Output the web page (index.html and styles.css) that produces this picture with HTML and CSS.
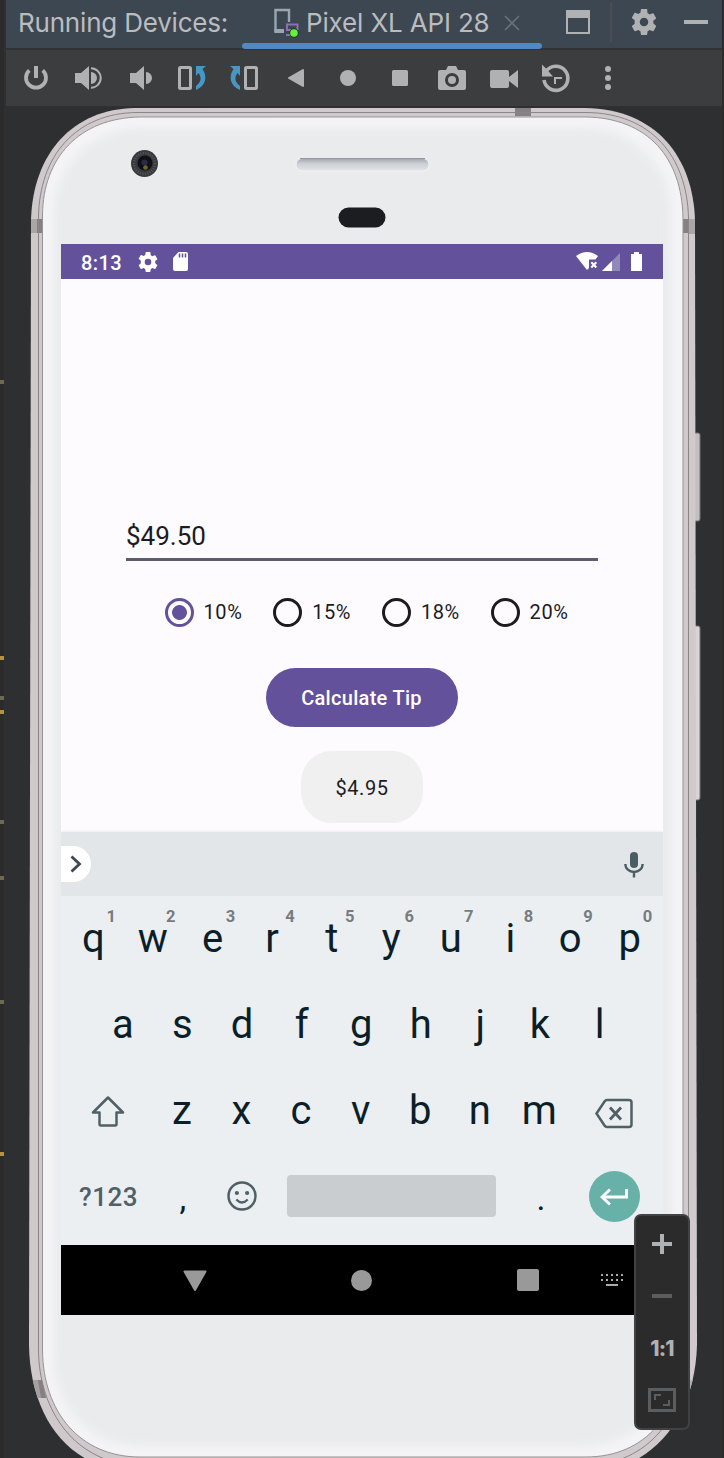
FILE: index.html
```html
<!DOCTYPE html>
<html lang="en">
<head>
<meta charset="utf-8">
<title>Running Devices</title>
<link rel="stylesheet" href="styles.css">
</head>
<body>
<div class="window">
  <aside class="gutter">
    <i class="mark" style="top:380px"></i><i class="mark hot" style="top:656px"></i><i class="mark" style="top:696px"></i><i class="mark hot" style="top:710px"></i><i class="mark" style="top:820px"></i><i class="mark" style="top:876px"></i><i class="mark" style="top:1000px"></i><i class="mark hot" style="top:1152px"></i>
  </aside>
  <main class="main">
    <header class="tabs">
      <span class="title">Running Devices:</span>
      <div class="tab">
        <svg class="tab-device" width="28" height="32" viewBox="0 0 28 32"><path d="M12 25H3.500V4H17v12" fill="none" stroke="#9aa7b0" stroke-width="2.400"/><path d="M2.500 23H12v4H2.500z" fill="#9aa7b0"/><path d="M15 25v-6.500H25.500V24M14 29h5M15 24h6" fill="none" stroke="#8a72b0" stroke-width="2"/><circle cx="22" cy="27" r="4.700" fill="#253a22"/><circle cx="22" cy="27" r="3.800" fill="#62f23c"/></svg>
        <span class="tab-name">Pixel XL API 28</span>
        <svg class="tab-close" width="16" height="16" viewBox="0 0 16 16"><path d="M1 1l14 14M15 1L1 15" stroke="#687178" stroke-width="1.700"/></svg>
      </div>
      <svg class="win-icon" width="24" height="24" viewBox="0 0 24 24"><path d="M0 0h24v24H0zM2 8v14h20V8z" fill="#afb1b3" fill-rule="evenodd"/></svg>
      <i class="divider"></i>
      <svg class="gear" width="26" height="26" viewBox="2 2 20 20"><path fill="#afb1b3" d="M19.140 12.940c.04-.3.06-.61.06-.94s-.02-.64-.07-.94l2.030-1.580a.49.49 0 0 0 .12-.61l-1.920-3.320a.49.49 0 0 0-.59-.22l-2.390.96a7 7 0 0 0-1.620-.94l-.36-2.540A.48.48 0 0 0 13.920 2h-3.840a.48.48 0 0 0-.47.410l-.36 2.540c-.59.24-1.130.57-1.620.94l-2.390-.96a.48.48 0 0 0-.59.220L2.740 8.470a.48.48 0 0 0 .12.610l2.030 1.580a6 6 0 0 0 0 2.680l-2.030 1.580a.49.49 0 0 0-.12.610l1.920 3.320c.12.220.37.290.59.220l2.390-.96c.5.380 1.030.7 1.620.94l.36 2.540c.05.240.24.410.48.410h3.840c.24 0 .44-.17.470-.41l.36-2.540a7 7 0 0 0 1.620-.94l2.390.96c.22.080.47 0 .59-.22l1.920-3.320a.48.48 0 0 0-.12-.61zM12 15.300A3.300 3.300 0 1 1 12 8.700a3.300 3.300 0 0 1 0 6.600z"/></svg>
      <i class="minimize"></i>
    </header>
    <nav class="tools">
      <svg viewBox="0 0 32 32"><path d="M9.300 8.300a10 10 0 1 0 13.400 0" fill="none" stroke="#afb1b3" stroke-width="3.800"/><path d="M14 4h4v12h-4z" fill="#afb1b3"/></svg>
      <svg viewBox="0 0 32 32"><g fill="#afb1b3"><path d="M3 11h6l8-7v24l-8-7H3zM19 10a6 6 0 0 1 0 12z"/></g><path d="M19 6.300a9.700 9.700 0 0 1 0 19.400" fill="none" stroke="#afb1b3" stroke-width="2"/></svg>
      <svg viewBox="0 0 32 32"><path d="M6 11h6l8-7v24l-8-7H6zM22 10a6 6 0 0 1 0 12z" fill="#afb1b3"/></svg>
      <svg viewBox="0 0 32 32"><rect x="3.500" y="5.500" width="11" height="21" rx="1" fill="none" stroke="#afb1b3" stroke-width="3"/><path d="M20 4h10l-3.500 3c5.500 8 3 17-6.500 21v-4c5-4 6-8 2.500-13L20 14z" fill="#4796c6"/></svg>
      <svg viewBox="0 0 32 32"><rect x="17.500" y="5.500" width="11" height="21" rx="1" fill="none" stroke="#afb1b3" stroke-width="3"/><path d="M12 4H2l3.500 3C0 15 2.500 24 12 28v-4c-5-4-6-8-2.500-13L12 14z" fill="#4796c6"/></svg>
      <svg viewBox="0 0 32 32"><path d="M9 16L23 8v16z" fill="#afb1b3" stroke="#afb1b3" stroke-width="2" stroke-linejoin="round"/></svg>
      <svg viewBox="0 0 32 32"><circle cx="16" cy="16" r="8" fill="#afb1b3"/></svg>
      <svg viewBox="0 0 32 32"><rect x="8" y="8" width="16" height="16" rx="1.500" fill="#afb1b3"/></svg>
      <svg viewBox="0 0 32 32"><path fill-rule="evenodd" fill="#afb1b3" d="M4 8h6l2-4h8l2 4h6q2 0 2 2v16q0 2-2 2H4q-2 0-2-2V10q0-2 2-2zM16 11a7 7 0 1 0 0 14 7 7 0 0 0 0-14z"/><circle cx="16" cy="18" r="4" fill="#afb1b3"/></svg>
      <svg viewBox="0 0 32 32"><path d="M2 10q0-2 2-2h15q2 0 2 2v5l9-7v18l-9-7v5q0 2-2 2H4q-2 0-2-2z" fill="#afb1b3"/></svg>
      <svg viewBox="0 0 32 32"><path d="M6 9.500a12 12 0 1 1-2 8.500" fill="none" stroke="#afb1b3" stroke-width="3.600"/><path d="M2 2.500l4.500 4.500 6.500 7.500H2z" fill="#afb1b3"/><path d="M14 16h8M15 15v7" stroke="#afb1b3" stroke-width="2"/></svg>
      <svg viewBox="0 0 32 32"><g fill="#afb1b3"><circle cx="16" cy="7" r="3"/><circle cx="16" cy="16" r="3"/><circle cx="16" cy="25" r="3"/></g></svg>
    </nav>
    <section class="stage">
      <svg class="frame" width="718" height="1352" viewBox="6 106 718 1352">
        <defs>
          <linearGradient id="side" x1="0" x2="1" y1="0" y2="0"><stop offset="0" stop-color="#a8a3a5"/><stop offset=".006" stop-color="#ddd7d9"/><stop offset=".014" stop-color="#cfc9cb"/><stop offset=".985" stop-color="#d0cacc"/><stop offset=".992" stop-color="#e5dfe2"/><stop offset="1" stop-color="#aaa3a6"/></linearGradient>
          <filter id="soft" x="-10%" y="-10%" width="120%" height="120%"><feGaussianBlur stdDeviation="4"/></filter>
          <clipPath id="face"><path d="M42.500 215C43 158 79 118 140 117H586C648 118 682 158 683 218V1350C682 1412 646 1457 586 1457H140C80 1457 43 1412 42.500 1350Z"/></clipPath>
          <clipPath id="body"><path d="M31 220C33 153 73 109 135 108H585C656 109 693 157 695 220L697 1345C695 1418 652 1472 585 1472H140C68 1472 30 1416 29 1345Z"/></clipPath>
          <linearGradient id="mesh" x1="0" x2="0" y1="0" y2="1"><stop offset="0" stop-color="#a2a5ad"/><stop offset=".4" stop-color="#cbced3"/><stop offset="1" stop-color="#e3e5e9"/></linearGradient>
        </defs>
        <rect x="694" y="433" width="6" height="88" rx="2" fill="#c4bec0" stroke="#777476"/>
        <rect x="694" y="626" width="6" height="174" rx="2" fill="#d9d3d6" stroke="#777476"/>
        <g clip-path="url(#body)">
          <path d="M6 106h718v1352H6z" fill="url(#side)"/>
          <path d="M30 219h12v14H30z" fill="#aaa5a7"/><path d="M37 219h5v14h-5zM683 219h5v14h-5z" fill="#858183"/><path d="M688 219h8v15h-8z" fill="#aaa5a7"/>
          <path d="M28 1380h14l4 18H28z" fill="#a5a0a2"/><path d="M515 108h16v8h-16zM38 1380h4l4 18h-5z" fill="#858183"/><path d="M686 1380h12v18h-16z" fill="#b5b0b2"/>
        </g>
        <path d="M38.500 218C39 156 76 113 137 112.500H586C651 113 687 156 688.500 218V1349C687 1415 648 1465 586 1465H140C76 1465 38.500 1411 38.500 1349Z" fill="none" stroke="#8a8587"/>
        <g clip-path="url(#face)"><path d="M6 106h718v1352H6z" fill="#f4f4f6"/><rect x="54" y="128" width="617" height="1318" rx="86" fill="#eaebed" filter="url(#soft)"/></g>
        <path d="M42.500 215C43 158 79 118 140 117H586C648 118 682 158 683 218V1350C682 1412 646 1457 586 1457H140C80 1457 43 1412 42.500 1350Z" fill="none" stroke="#979395"/>
        <circle cx="144.500" cy="163.500" r="13.500" fill="#38393c"/><circle cx="144.500" cy="163.500" r="10.500" fill="none" stroke="#57585c" stroke-width="2.500" stroke-dasharray="1 1.500"/><circle cx="145" cy="163" r="7.500" fill="#101116"/><circle cx="144.500" cy="162.500" r="3" fill="#2a2a45"/><circle cx="145.500" cy="167.500" r="2.300" fill="#6c692c"/>
        <rect x="296" y="158.500" width="133" height="12.500" rx="6" fill="url(#mesh)" stroke="#f3f4f5"/><path d="M300 158.500h125" stroke="#9598a0"/>
        <rect x="338.500" y="207.500" width="47" height="20" rx="10" fill="#1b1d20"/>
      </svg>
      <div class="screen">
        <div class="status">
          <span class="time">8:13</span>
          <svg class="s-gear" width="20" height="20" viewBox="2 2 20 20"><path fill="#fff" d="M19.140 12.940c.04-.3.06-.61.06-.94s-.02-.64-.07-.94l2.030-1.580a.49.49 0 0 0 .12-.61l-1.920-3.320a.49.49 0 0 0-.59-.22l-2.390.96a7 7 0 0 0-1.620-.94l-.36-2.540A.48.48 0 0 0 13.920 2h-3.840a.48.48 0 0 0-.47.410l-.36 2.540c-.59.24-1.130.57-1.620.94l-2.390-.96a.48.48 0 0 0-.59.220L2.740 8.470a.48.48 0 0 0 .12.610l2.030 1.580a6 6 0 0 0 0 2.680l-2.030 1.580a.49.49 0 0 0-.12.610l1.920 3.320c.12.220.37.290.59.220l2.390-.96c.5.380 1.030.7 1.620.94l.36 2.540c.05.240.24.410.48.410h3.840c.24 0 .44-.17.470-.41l.36-2.540a7 7 0 0 0 1.620-.94l2.390.96c.22.080.47 0 .59-.22l1.920-3.320a.48.48 0 0 0-.12-.61zM12 15.300A3.300 3.300 0 1 1 12 8.700a3.300 3.300 0 0 1 0 6.600z"/></svg>
          <svg class="s-card" width="15" height="19" viewBox="0 0 15 19"><path d="M5.500 0H13q2 0 2 2v15q0 2-2 2H2q-2 0-2-2V6z" fill="#fff"/><path d="M6.500 1.500v4M9.500 1.500v4M12.500 1.500v4" stroke="#63529b" stroke-width="1.500"/></svg>
          <svg class="s-wifi" width="22" height="19" viewBox="0 0 22 19"><path d="M0 4Q11-4 22 4l-2.500 3.500H13V16l-2 2z" fill="#fff"/><path d="M15.300 10.300l5 5.200M20.300 10.300l-5 5.200" stroke="#fff" stroke-width="2"/></svg>
          <svg class="s-cell" width="18" height="18" viewBox="0 0 18 18"><path d="M0 18L18 0v18z" fill="#9388ba"/><path d="M0 18L10 8v10z" fill="#fff"/></svg>
          <svg class="s-batt" width="11" height="19" viewBox="0 0 11 19"><path d="M3 0h5v2h3v17H0V2h3z" fill="#fff"/></svg>
        </div>
        <div class="app">
          <div class="amount">$49.50</div>
          <div class="radios">
            <span class="option on"><i class="ring"></i>10%</span>
            <span class="option"><i class="ring"></i>15%</span>
            <span class="option"><i class="ring"></i>18%</span>
            <span class="option"><i class="ring"></i>20%</span>
          </div>
          <div class="button">Calculate Tip</div>
          <div class="result">$4.95</div>
        </div>
        <div class="keyboard">
          <div class="suggest">
            <span class="expand"><svg width="12" height="18" viewBox="0 0 12 18"><path d="M1.500 1.500L9.500 9l-8 7.500" fill="none" stroke="#3c4a50" stroke-width="2.800"/></svg></span>
            <svg width="20" height="27" viewBox="0 0 20 27"><rect x="6" y="1" width="8" height="16" rx="4" fill="#4b5c63"/><path d="M1.300 13a8.700 8 0 0 0 17.400 0M10 21v5.500" fill="none" stroke="#4b5c63" stroke-width="2.400"/></svg>
          </div>
          <div class="row r1"><span class="key">q<b>1</b></span><span class="key">w<b>2</b></span><span class="key">e<b>3</b></span><span class="key">r<b>4</b></span><span class="key">t<b>5</b></span><span class="key">y<b>6</b></span><span class="key">u<b>7</b></span><span class="key">i<b>8</b></span><span class="key">o<b>9</b></span><span class="key">p<b>0</b></span></div>
          <div class="row r2"><span class="key">a</span><span class="key">s</span><span class="key">d</span><span class="key">f</span><span class="key">g</span><span class="key">h</span><span class="key">j</span><span class="key">k</span><span class="key">l</span></div>
          <div class="row r3">
            <span class="key"><svg width="34" height="33" viewBox="0 0 34 33"><path d="M17 2.500L2 17.500h6.500V29q0 1.500 1.500 1.500h14q1.500 0 1.500-1.500V17.500H32z" fill="none" stroke="#4f6067" stroke-width="2.500" stroke-linejoin="round"/></svg></span>
            <span class="key">z</span><span class="key">x</span><span class="key">c</span><span class="key">v</span><span class="key">b</span><span class="key">n</span><span class="key">m</span>
            <span class="key"><svg width="38" height="31" viewBox="0 0 38 31"><path d="M12 2h22q2.500 0 2.500 2.500v22q0 2.500-2.500 2.500H12q-1.500 0-2.300-1.200L1.500 15.500 9.700 3.200Q10.500 2 12 2z" fill="none" stroke="#4f6067" stroke-width="2.500"/><path d="M15 9.500l11 12M26 9.500l-11 12" stroke="#4f6067" stroke-width="2.800"/></svg></span>
          </div>
          <div class="row r4">
            <span class="key sym">?123</span><span class="key punct">,</span>
            <span class="key"><svg width="30" height="30" viewBox="0 0 30 30"><circle cx="15" cy="15" r="13.500" fill="none" stroke="#4f6067" stroke-width="2.500"/><circle cx="9.900" cy="12" r="2.100" fill="#4f6067"/><circle cx="20.100" cy="12" r="2.100" fill="#4f6067"/><path d="M9.300 18.500q5.700 6 11.400 0" fill="none" stroke="#4f6067" stroke-width="2.300"/></svg></span>
            <span class="space"></span><span class="key punct">.</span>
            <span class="enter"><svg width="28" height="18" viewBox="0 0 28 18"><path d="M26.500 1v8H2M10 1.500L2 9l8 7.500" fill="none" stroke="#fff" stroke-width="2.800"/></svg></span>
          </div>
        </div>
        <div class="navbar">
          <svg width="24" height="22" viewBox="0 0 24 22"><path d="M1.500 2.500h21L12 21z" fill="#999" stroke="#999" stroke-width="2" stroke-linejoin="round"/></svg>
          <i class="home"></i><i class="recent"></i>
          <svg class="ime" width="22" height="12" viewBox="0 0 22 12"><path d="M0 1h22M0 6h22" stroke="#aaa" stroke-width="2" stroke-dasharray="2 3"/><path d="M5 11h12" stroke="#aaa" stroke-width="2"/></svg>
        </div>
      </div>
      <div class="zoom">
        <svg width="28" height="28" viewBox="0 0 28 28"><path d="M4 14h20M14 4v20" stroke="#afb1b3" stroke-width="4"/></svg>
        <svg width="28" height="28" viewBox="0 0 28 28"><path d="M4 14h20" stroke="#5c5d5e" stroke-width="4"/></svg>
        <span class="ratio">1:1</span>
        <svg width="28" height="28" viewBox="0 0 28 28"><path d="M1.500 3.500h25v21h-25z" fill="none" stroke="#5c5d5e" stroke-width="3"/><path d="M7 14V9h6M21 14v5h-6" fill="none" stroke="#5c5d5e" stroke-width="2"/></svg>
      </div>
    </section>
  </main>
  <aside class="edge"></aside>
</div>
</body>
</html>
```

FILE: styles.css
```css
* { box-sizing: border-box; }
body { margin: 0; background: #2d2f31; font-family: Roboto, "Liberation Sans", sans-serif; }
svg { display: block; flex: none; }
i { display: block; flex: none; }
.window { display: flex; width: 724px; height: 1458px; overflow: hidden; }
.gutter { position: relative; width: 6px; flex: none; background: #2b2b2b; border-right: 2px solid #2f3031; }
.mark { position: absolute; left: 0; width: 4px; height: 4px; background: #6f6a51; }
.mark.hot { background: #b9913a; }
.main { width: 716px; flex: none; }
.edge { width: 2px; background: #2b2b2b; }

.tabs { display: flex; align-items: center; height: 50px; padding-bottom: 4px; background: #3d4752; border-bottom: 2px solid #303234; color: #bbbcbe; font-family: Inter, sans-serif; font-size: 26px; white-space: nowrap; }
.title { width: 236px; padding: 1px 0 0 12px; letter-spacing: -.2px; }
.tab { position: relative; display: flex; align-items: center; width: 300px; height: 46px; padding-left: 30px; }
.tab::after { content: ""; position: absolute; left: 0; right: 0; bottom: -4px; height: 6px; border-radius: 3px; background: #5287c6; }
.tab-name { width: 188px; margin-left: 6px; padding-top: 1px; letter-spacing: -.15px; }
.tab-close { margin: 2px 0 0 10px; }
.win-icon { margin-left: 24px; }
.divider { width: 2px; height: 40px; margin-left: 20px; background: #4d4d4f; }
.gear { margin-left: 19px; }
.minimize { width: 24px; height: 4px; margin-left: 27px; background: #afb1b3; }

.tools { display: grid; grid-template-columns: repeat(12, 52px); align-items: center; justify-items: center; height: 56px; padding-left: 4px; background: #3c3d3f; }
.tools svg { width: 32px; height: 32px; }

.stage { position: relative; height: 1352px; padding: 137px 0 0 55px; border-top: 1px solid #303030; }
.frame { position: absolute; left: 0; top: -1px; }
.screen { position: relative; width: 602px; }
.status { display: flex; align-items: center; height: 35px; padding-left: 20px; background: #63529b; color: #fff; font-size: 20px; font-weight: 500; }
.time { width: 57px; padding-top: 2px; letter-spacing: .4px; }
.s-card { margin-left: 15px; }
.s-wifi { margin-left: 388px; }
.s-cell { margin-left: 4px; }
.s-batt { margin-left: 11px; }

.app { display: flex; flex-direction: column; align-items: center; height: 553px; padding-top: 234px; background: #fefbff; color: #1c1b1f; }
.amount { width: 472px; height: 48px; font-size: 26px; line-height: 47px; border-bottom: 3px solid #605c70; }
.radios { display: flex; width: 436px; height: 32px; margin: 35px 0 0 41px; }
.option { display: flex; align-items: center; gap: 10px; width: 108.700px; font-size: 20px; line-height: 34px; letter-spacing: .6px; }
.ring { width: 29px; height: 29px; border: 3px solid #1c1b1f; border-radius: 50%; }
.on .ring { border-color: #63529b; background: radial-gradient(circle, #63529b 0 7px, transparent 7.800px); }
.button { width: 192px; height: 59px; margin: 40px 1px 0 0; border-radius: 30px; background: #63529b; color: #fff; font-size: 20px; font-weight: 500; line-height: 61px; text-align: center; letter-spacing: .3px; }
.result { width: 122px; height: 72px; margin-top: 24px; border-radius: 31px; background: #f0f0f0; font-size: 20px; line-height: 74px; text-align: center; letter-spacing: .6px; }

.keyboard { height: 413px; background: #ebeff2; color: #0c1f28; box-shadow: 0 -1px 2px #eeedf1; }
.suggest { display: flex; align-items: center; justify-content: space-between; height: 64px; padding-right: 19px; background: #e2e6e9; }
.expand { display: flex; align-items: center; width: 30px; height: 36px; padding-left: 9px; border-radius: 0 18px 18px 0; background: #fff; }
.row { display: flex; align-items: center; height: 86px; }
.key { position: relative; display: flex; align-items: center; justify-content: center; width: 59.600px; height: 86px; font-size: 40px; line-height: 86px; padding-top: 2px; }
.key b { position: absolute; left: 43px; top: 12px; font-size: 16.500px; line-height: 20px; font-weight: 700; color: #777c80; }
.r1 { margin-top: -1px; padding-left: 2.500px; }
.r2 { padding-left: 32px; }
.r3 .key:first-child { width: 91px; padding: 3px 0 0 3px; }
.r3 .key:last-child { width: 90px; padding: 6px 0 0 0; }
.r4 .sym { width: 92px; padding: 1px 0 0 3px; color: #4f6067; font-size: 26px; font-weight: 500; letter-spacing: .5px; }
.r4 .key:nth-child(3) { padding-top: 0; }
.r4 .punct { font-size: 34px; padding-top: 4px; }
.space { width: 209px; height: 42px; margin: 0 15px; border-radius: 4px; background: #c9cdd0; }
.enter { display: flex; align-items: center; justify-content: center; width: 51px; height: 51px; margin-left: 18px; border-radius: 50%; background: #68b1a9; padding-top: 2px; }

.navbar { display: flex; align-items: center; height: 70px; padding-left: 122px; background: #000; }
.home { width: 21px; height: 21px; margin-left: 144px; border-radius: 50%; background: #999; }
.recent { width: 22px; height: 22px; margin-left: 145px; border-radius: 2px; background: #999; }
.ime { margin-left: 62px; }

.zoom { position: absolute; left: 628px; top: 1107px; display: flex; flex-direction: column; align-items: center; gap: 24px; width: 56px; height: 216px; padding-top: 14px; border: 2px solid #414244; border-radius: 7px; background: #2b2b2b; }
.ratio { height: 28px; font: 800 21px/30px Inter, sans-serif; letter-spacing: -.8px; color: #afb1b3; }
```
